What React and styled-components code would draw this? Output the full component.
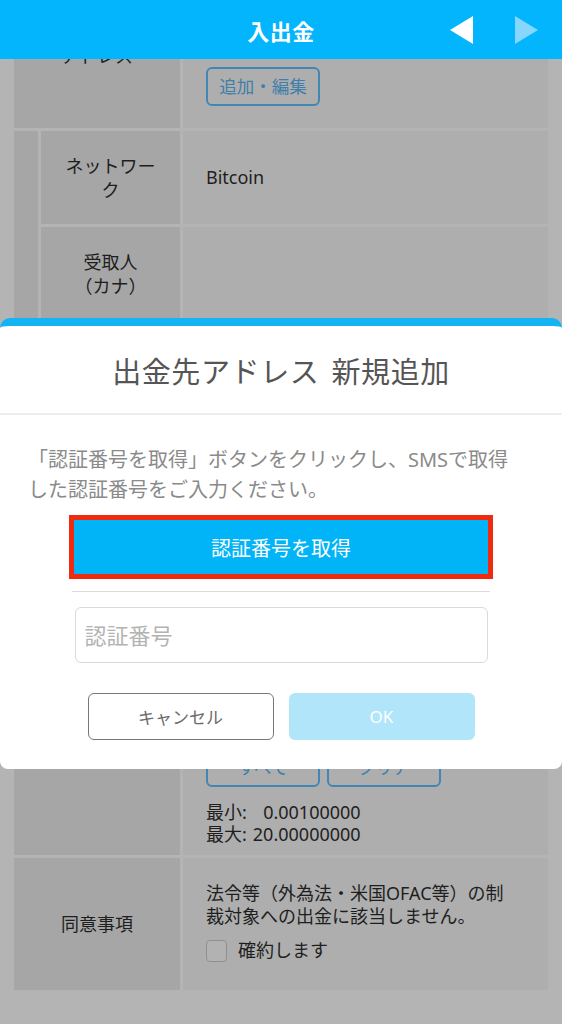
import React from 'react'
import styled, { createGlobalStyle } from 'styled-components'

const GlobalStyle = createGlobalStyle`
  html, body {
    margin: 0;
    padding: 0;
  }
  body {
    background: #b4b4b4;
    font-family: 'Noto Sans', 'Noto Sans CJK JP', sans-serif;
    color: #1e1e1e;
    overflow: hidden;
  }
  * {
    box-sizing: border-box;
  }
`

const Screen = styled.div`
  position: relative;
  width: 562px;
  height: 1024px;
  overflow: hidden;
  background: #b4b4b4;
`

const Header = styled.header`
  position: absolute;
  top: 0;
  left: 0;
  right: 0;
  height: 59px;
  z-index: 2;
  display: grid;
  grid-template-columns: 1fr auto 1fr;
  align-items: center;
  background: #02b5fc;
  color: #fff;
  h1 {
    margin: 0;
    font-size: 22px;
    font-weight: 700;
    letter-spacing: 0.5px;
  }
`

const Arrows = styled.div`
  display: flex;
  justify-content: flex-end;
  gap: 42px;
  padding-right: 24px;
  svg {
    display: block;
  }
`

// page scrolled a little, so the first row sits under the header
const Content = styled.main`
  margin-top: -40px;
  padding: 0 14px;
`

const Table = styled.div`
  display: flex;
  flex-direction: column;
  gap: 3px;
`

const Row = styled.div`
  display: grid;
  grid-template-columns: ${(p) => p.$label}px 1fr;
  gap: 3px;
  min-height: ${(p) => p.$h}px;
`

const Label = styled.div`
  display: flex;
  align-items: center;
  justify-content: center;
  padding: 0 18px;
  background: #a6a6a6;
  font-size: 18px;
  line-height: 24px;
  text-align: center;
`

const Value = styled.div`
  display: flex;
  flex-direction: column;
  justify-content: ${(p) => p.$justify || 'center'};
  padding: ${(p) => p.$pad || '0 20px 0 23px'};
  background: #aeaeae;
  font-size: 18px;
  line-height: 23px;
`

const SubGroup = styled.div`
  display: grid;
  grid-template-columns: 24px 1fr;
  gap: 3px;
`

const Strip = styled.div`
  background: #a6a6a6;
`

const FakeSelect = styled.div`
  height: 48px;
  border: 1px solid #9a9a9a;
  border-radius: 5px;
  background: #b3b3b3;
`

const FakeInput = styled.div`
  height: 50px;
  border: 1px solid #9a9a9a;
  border-radius: 5px;
  background: #b3b3b3;
`

const OutlineBtn = styled.div`
  width: 114px;
  height: 39px;
  display: flex;
  align-items: center;
  justify-content: center;
  border: 2px solid #4286b4;
  border-radius: 6px;
  color: #3f7fab;
  font-size: 17.5px;
`

const BtnRow = styled.div`
  display: flex;
  gap: 7px;
`

const Stack = styled.div`
  display: flex;
  flex-direction: column;
  gap: ${(p) => p.$gap || 0}px;
`

const Limits = styled.div`
  display: grid;
  grid-template-columns: auto auto;
  justify-content: start;
  column-gap: 6px;
  line-height: 22px;
  span:nth-child(even) {
    text-align: right;
  }
`

const Check = styled.label`
  display: flex;
  align-items: center;
  gap: 11px;
  margin-top: 11px;
  span {
    width: 21px;
    height: 22px;
    border: 1.5px solid #8f8f8f;
    border-radius: 4px;
    background: #b2b2b2;
  }
`

const Modal = styled.div`
  position: absolute;
  top: 318px;
  left: 0;
  right: 0;
  height: 451px;
  z-index: 3;
  display: flex;
  flex-direction: column;
  background: #fff;
  border-top: 8px solid #14b3f3;
  border-radius: 10px 10px 8px 8px;
`

const ModalTitle = styled.h2`
  margin: 0;
  padding: 27px 0 22px;
  border-bottom: 2px solid #ececec;
  color: #555;
  font-size: 29px;
  font-weight: 400;
  line-height: 38px;
  text-align: center;
  letter-spacing: 0.6px;
  word-spacing: 4px;
`

const ModalBody = styled.div`
  display: flex;
  flex-direction: column;
  align-items: center;
  padding: 30px 28px 0;
`

const Note = styled.p`
  align-self: stretch;
  margin: 0;
  color: #8a8a8a;
  font-size: 20px;
  line-height: 30px;
`

const Highlight = styled.div`
  width: 424px;
  margin-top: 10px;
  border: 5px solid #f02a0e;
`

const PrimaryBtn = styled.button`
  display: block;
  width: 100%;
  height: 54px;
  border: none;
  background: #00b4f7;
  color: #fff;
  font-family: inherit;
  font-size: 20px;
`

const Divider = styled.hr`
  width: 418px;
  margin: 12px 0 0;
  border: none;
  border-top: 1px solid #dcdcdc;
`

const CodeInput = styled.input`
  width: 413px;
  height: 56px;
  margin-top: 15px;
  padding: 0 9px;
  border: 1.5px solid #dadada;
  border-radius: 6px;
  font-family: inherit;
  font-size: 22px;
  outline: none;
  &::placeholder {
    color: #b3b3b3;
  }
`

const Actions = styled.div`
  display: flex;
  gap: 15px;
  margin-top: 30px;
`

const DialogBtn = styled.button`
  width: 186px;
  height: 47px;
  border: ${(p) => (p.$ok ? 'none' : '1.5px solid #777')};
  border-radius: 6px;
  background: ${(p) => (p.$ok ? '#b1e5fa' : '#fff')};
  color: ${(p) => (p.$ok ? '#fff' : '#6a6a6a')};
  font-family: inherit;
  font-size: 17px;
`

const Triangle = ({ dir, color }) => (
  <svg width='23' height='28' viewBox='0 0 23 28'>
    {dir === 'left' ? (
      <polygon points='23,0 23,28 0,14' fill={color} />
    ) : (
      <polygon points='0,0 0,28 23,14' fill={color} />
    )}
  </svg>
)

const App = () => {
  return (
    <Screen>
      <GlobalStyle />
      <Header>
        <div />
        <h1>入出金</h1>
        <Arrows>
          <Triangle dir='left' color='#ffffff' />
          <Triangle dir='right' color='#86d6fd' />
        </Arrows>
      </Header>

      <Content>
        <Table>
          <Row $label={166} $h={168}>
            <Label>
              出金先
              <br />
              アドレス
            </Label>
            <Value $justify='flex-end' $pad='0 20px 22px 23px'>
              <Stack $gap={10}>
                <FakeSelect />
                <OutlineBtn>追加・編集</OutlineBtn>
              </Stack>
            </Value>
          </Row>

          <SubGroup>
            <Strip />
            <Table>
              <Row $label={139} $h={93}>
                <Label>ネットワーク</Label>
                <Value>Bitcoin</Value>
              </Row>
              <Row $label={139} $h={93}>
                <Label>
                  受取人
                  <br />
                  （カナ）
                </Label>
                <Value />
              </Row>
              <Row $label={139} $h={93}>
                <Label>
                  受取人
                  <br />
                  （英字）
                </Label>
                <Value />
              </Row>
            </Table>
          </SubGroup>

          <Row $label={166} $h={93}>
            <Label>送金目的</Label>
            <Value />
          </Row>

          <Row $label={166} $h={340}>
            <Label>出金数量</Label>
            <Value $justify='flex-end' $pad='0 20px 10px 23px'>
              <Stack $gap={14}>
                <FakeInput />
                <div>出金可能数量: 0.00000000</div>
                <BtnRow>
                  <OutlineBtn>すべて</OutlineBtn>
                  <OutlineBtn>クリア</OutlineBtn>
                </BtnRow>
                <Limits>
                  <span>最小:</span>
                  <span>0.00100000</span>
                  <span>最大:</span>
                  <span>20.00000000</span>
                </Limits>
              </Stack>
            </Value>
          </Row>

          <Row $label={166} $h={132}>
            <Label>同意事項</Label>
            <Value $justify='flex-start' $pad='24px 36px 0 23px'>
              <div>法令等（外為法・米国OFAC等）の制裁対象への出金に該当しません。</div>
              <Check>
                <span />
                確約します
              </Check>
            </Value>
          </Row>
        </Table>
      </Content>

      <Modal>
        <ModalTitle>出金先アドレス 新規追加</ModalTitle>
        <ModalBody>
          <Note>
            「認証番号を取得」ボタンをクリックし、SMSで取得
            <br />
            した認証番号をご入力ください。
          </Note>
          <Highlight>
            <PrimaryBtn>認証番号を取得</PrimaryBtn>
          </Highlight>
          <Divider />
          <CodeInput placeholder='認証番号' />
          <Actions>
            <DialogBtn>キャンセル</DialogBtn>
            <DialogBtn $ok>OK</DialogBtn>
          </Actions>
        </ModalBody>
      </Modal>
    </Screen>
  )
}

export default App
